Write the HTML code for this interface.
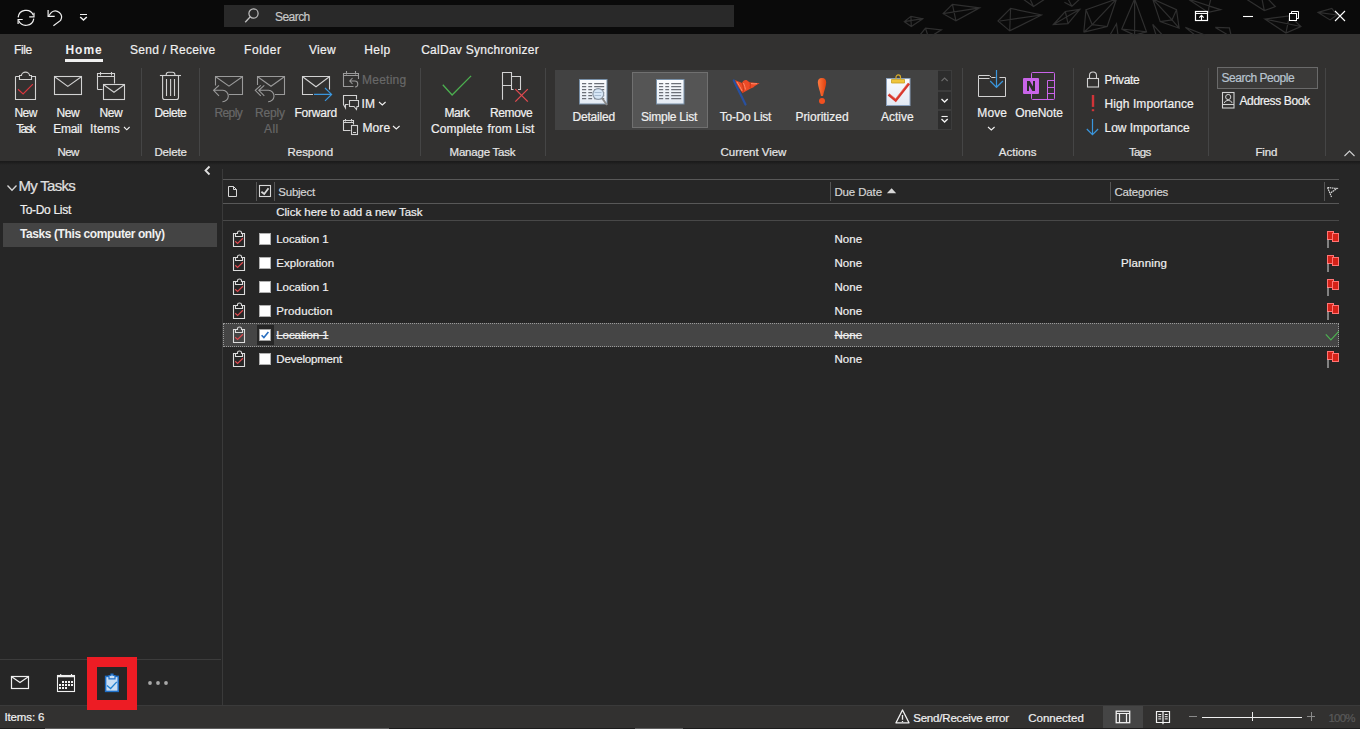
<!DOCTYPE html>
<html><head><meta charset="utf-8"><style>
html,body{margin:0;padding:0;width:1360px;height:729px;overflow:hidden;background:#262626}
body{position:relative;font-family:"Liberation Sans",sans-serif}
body>div,body>svg,body>span{position:absolute;display:block}
span{white-space:nowrap;-webkit-text-stroke:0.2px currentColor}
svg{overflow:visible}
</style></head><body>
<div style="left:0px;top:0px;width:1360px;height:34px;background:#0a0a0a;"></div>
<div style="left:224px;top:5px;width:510px;height:22px;background:#292929;"></div>
<div style="left:0px;top:34px;width:1360px;height:127px;background:#323130;"></div>
<div style="left:0px;top:161px;width:1360px;height:544px;background:#262626;"></div>
<div style="left:0px;top:161px;width:1360px;height:4px;background:linear-gradient(#1a1a1a,#1e1e1e 40%,#262626);"></div>
<div style="left:141px;top:68px;width:1px;height:88px;background:#454545;"></div>
<div style="left:199px;top:68px;width:1px;height:88px;background:#454545;"></div>
<div style="left:420px;top:68px;width:1px;height:88px;background:#454545;"></div>
<div style="left:545px;top:68px;width:1px;height:88px;background:#454545;"></div>
<div style="left:962px;top:68px;width:1px;height:88px;background:#454545;"></div>
<div style="left:1073px;top:68px;width:1px;height:88px;background:#454545;"></div>
<div style="left:1208px;top:68px;width:1px;height:88px;background:#454545;"></div>
<div style="left:1325px;top:68px;width:1px;height:88px;background:#454545;"></div>
<div style="left:65px;top:59px;width:38px;height:3px;background:#f0f0f0;"></div>
<div style="left:555px;top:70px;width:383px;height:60px;background:#424242;"></div>
<div style="left:632px;top:72px;width:76px;height:56px;background:#555555;box-sizing:border-box;border:1px solid #707070"></div>
<div style="left:938px;top:70px;width:14px;height:60px;background:#3c3c3c;"></div>
<div style="left:938px;top:71px;width:13px;height:19px;background:#2d2d2d;"></div>
<div style="left:938px;top:92px;width:13px;height:17px;background:#2d2d2d;"></div>
<div style="left:938px;top:111px;width:13px;height:18px;background:#2d2d2d;"></div>
<div style="left:1217px;top:67px;width:101px;height:22px;background:#3b3a39;box-sizing:border-box;border:1px solid #6a6a6a"></div>
<div style="left:3px;top:223px;width:214px;height:24px;background:#444444;"></div>
<div style="left:222px;top:169px;width:1px;height:536px;background:#3a3a3a;"></div>
<div style="left:0px;top:659px;width:221px;height:1px;background:#3c3c3c;"></div>
<div style="left:223px;top:179px;width:1116px;height:1px;background:#585858;"></div>
<div style="left:223px;top:203px;width:1116px;height:1px;background:#585858;"></div>
<div style="left:223px;top:220px;width:1116px;height:1px;background:#484848;"></div>
<div style="left:256px;top:182px;width:1px;height:19px;background:#555555;"></div>
<div style="left:274px;top:182px;width:1px;height:19px;background:#555555;"></div>
<div style="left:830px;top:182px;width:1px;height:19px;background:#555555;"></div>
<div style="left:1110px;top:182px;width:1px;height:19px;background:#555555;"></div>
<div style="left:1324px;top:182px;width:1px;height:19px;background:#555555;"></div>
<div style="left:223px;top:323px;width:1116px;height:24px;background:#454545;box-sizing:border-box;border:1px dotted #9a9a9a"></div>
<div style="left:257px;top:325px;width:17px;height:20px;background:#262626;"></div>
<div style="left:0px;top:705px;width:1360px;height:24px;background:#323130;"></div>
<div style="left:0px;top:705px;width:1360px;height:1px;background:#3a3a3a;"></div>
<div style="left:1103px;top:706px;width:40px;height:23px;background:#454545;"></div>
<div style="left:0px;top:728px;width:1360px;height:1px;background:#1c1c1c;"></div>
<div style="left:45px;top:728px;width:344px;height:1px;background:#5e5e5e;"></div>
<div style="left:635px;top:728px;width:48px;height:1px;background:#5e5e5e;"></div>
<div style="left:87px;top:657px;width:50px;height:53px;background:#ed1c24;"></div>
<div style="left:97px;top:667px;width:30px;height:33px;background:#262626;"></div>
<svg style="left:0;top:0" width="1360" height="34" viewBox="0 0 1360 34"><path d="M904.3,21.6 L910.9,16.3 L922.8,18.7 L911.3,26.5Z M910.9,16.3 L911.3,26.5 M904.3,21.6 L922.8,18.7 M943.1,13.7 L952.4,4.4 L979.7,7.8 L955.9,20.7Z M952.4,4.4 L955.9,20.7 M943.1,13.7 L979.7,7.8 M920,35 L925.5,28.2 L941.3,29.8 L930,37 M925.5,28.2 L928,36 M998,21 L1010.6,8.4 L1041.5,15 L1009.7,30.9Z M1010.6,8.4 L1009.7,30.9 M1000,21 L1041.5,15 M1023,-1 L1033.5,6.6 L1045,-1 M1030,-1 L1033.5,6.6 M1064.4,2.2 L1071.9,6.2 L1079.9,-1 M1068,-1 L1071.9,6.2 M1053.4,24.5 L1065.3,11.5 L1079.9,9.3 L1068,23.7Z M1065.3,11.5 L1068,23.7 M1053.4,24.5 L1079.9,9.3 M1086,9.7 L1116.5,-1 L1107.2,26.5 L1083.8,32.2 L1092.2,24.7 Z M1086,9.7 L1092.2,24.7 L1116.5,-1 M1092.2,24.7 L1107.2,26.5 M1086,9.7 L1083.8,32.2 M1110,35 L1116.5,23.8 L1118,35 M1134.6,-1 L1121.8,29.1 L1146.5,31.8 Z M1134.6,-1 L1134.6,35 M1121.8,29.1 L1134.6,35 L1146.5,31.8 M1152.7,-1 L1176.5,9.7 L1179.1,28.2 L1160.2,21.6 Z M1152.7,-1 L1172,19.9 L1176.5,9.7 M1160.2,21.6 L1172,19.9 L1179.1,28.2 M1188,-1 L1220.6,9.7 L1208.3,12.4 Z M1210.9,-1 L1209,6.2 L1220.6,9.7 M1209,6.2 L1208.3,12.4 M1152.7,24.3 L1162.4,35 M1152.7,24.3 L1156,35 M1185.3,27.4 L1205,35 M1185.3,27.4 L1195,35 M1215.3,27.4 L1229.4,27.8 L1231,35 M1215.3,27.4 L1228,35 M1246.2,-1 L1264.3,10.6 L1275.3,6.6 L1268,-1 M1264.3,10.6 L1262,-1 M1264.7,19 L1289.4,15.9 L1300.9,26.5 L1285.9,33.1 Z M1264.7,19 L1300.9,26.5 M1289.4,15.9 L1285.9,33.1 M1318.1,12.4 L1331.8,8.4 L1337,15 L1330,19.9 Z M1318.1,12.4 L1337,15" fill="none" stroke="#2f2f2f" stroke-width="1.2"/></svg>
<svg style="left:16px;top:8px;" width="20" height="20" viewBox="0 0 20 20"><path d="M2.1,9.4 A8,8 0 0 1 17.4,7.2 M17.8,10.6 A8,8 0 0 1 2.6,12.6" fill="none" stroke="#f0f0f0" stroke-width="1.2"/><path d="M18,4.8 V8.9 H13.2 M2.1,15.9 V11.5 H6.7" fill="none" stroke="#f0f0f0" stroke-width="1.2"/></svg>
<svg style="left:46px;top:8px;" width="20" height="20" viewBox="0 0 20 20"><path d="M2.1,2 V8.4 H8.7" fill="none" stroke="#f0f0f0" stroke-width="1.2"/><path d="M2.6,8 L5.4,4.4 A6.2,6.2 0 0 1 14.6,12.4 L7.4,17.8" fill="none" stroke="#f0f0f0" stroke-width="1.2"/></svg>
<svg style="left:78px;top:12px;" width="12" height="10" viewBox="0 0 12 10"><path d="M2,2.5 H9" stroke="#f0f0f0" stroke-width="1"/><path d="M2.2,5 L5.5,8 L8.8,5" fill="none" stroke="#f0f0f0" stroke-width="1.5"/></svg>
<svg style="left:243px;top:7px;" width="18" height="18" viewBox="0 0 18 18"><circle cx="10.5" cy="6.5" r="4.6" fill="none" stroke="#c0c0c0" stroke-width="1.2"/><path d="M7.3,9.8 L2.2,15.2" stroke="#c0c0c0" stroke-width="1.3"/></svg>
<svg style="left:1194px;top:10px;" width="16" height="12" viewBox="0 0 16 12"><rect x="1.5" y="1.5" width="12" height="9" fill="none" stroke="#fff" stroke-width="1.2"/><path d="M1.5,3.5 H13.5 M7.5,10.5 V5.5 M5.3,7.6 L7.5,5.4 L9.7,7.6" fill="none" stroke="#fff" stroke-width="1.1"/></svg>
<svg style="left:1242px;top:15px;" width="12" height="3" viewBox="0 0 12 3"><path d="M1,1.5 H11" stroke="#fff" stroke-width="1.1"/></svg>
<svg style="left:1288px;top:10px;" width="12" height="12" viewBox="0 0 12 12"><rect x="1.5" y="3.5" width="7" height="7" fill="#0a0a0a" stroke="#fff" stroke-width="1"/><path d="M3.5,3.5 V1.5 H10.5 V8.5 H8.5" fill="none" stroke="#fff" stroke-width="1"/></svg>
<svg style="left:1334px;top:10px;" width="12" height="12" viewBox="0 0 12 12"><path d="M1,1 L11,11 M11,1 L1,11" stroke="#fff" stroke-width="1.1"/></svg>
<svg style="left:14px;top:71px;" width="24" height="30" viewBox="0 0 24 30"><path d="M1.5,5.5 H5 M17.5,5.5 H21.5 V28.5 H1.5 V5.5" fill="none" stroke="#d2d2d2" stroke-width="1.1"/><path d="M5.5,4.5 H7.5 A4,3.4 0 0 1 15.5,4.5 H17.5 V8.5 H5.5 Z" fill="none" stroke="#d2d2d2" stroke-width="1.1"/><path d="M4,18.2 L9.1,23 L18.9,13.1" fill="none" stroke="#d9363e" stroke-width="1.2"/></svg>
<svg style="left:53px;top:75px;" width="30" height="21" viewBox="0 0 30 21"><rect x="1.5" y="1.5" width="27" height="18" fill="none" stroke="#d2d2d2" stroke-width="1.1"/><path d="M2,2 L14.8,11.4 L28,2" fill="none" stroke="#d2d2d2" stroke-width="1.1"/></svg>
<svg style="left:96px;top:71px;" width="31" height="30" viewBox="0 0 31 30"><path d="M1.5,18.5 V2.5 H18.5 V12.5 M1.5,5.5 H18.5 M4.5,1 V4.5 M15.5,1 V4.5 M1.5,18.5 H6.5" fill="none" stroke="#d2d2d2" stroke-width="1.1"/><rect x="7.5" y="13.5" width="21" height="15" fill="#323130" stroke="#d2d2d2" stroke-width="1.1"/><path d="M8,14 L18,21.3 L28,14" fill="none" stroke="#d2d2d2" stroke-width="1.1"/></svg>
<svg style="left:123px;top:126px;" width="8" height="5" viewBox="0 0 8 5"><path d="M1,1 L3.8,3.8 L6.6,1" fill="none" stroke="#f0f0f0" stroke-width="1.1"/></svg>
<svg style="left:158px;top:70px;" width="26" height="32" viewBox="0 0 26 32"><path d="M1.9,5.5 H23" fill="none" stroke="#d2d2d2" stroke-width="1.1"/><path d="M8.2,5.5 V4.5 A2.3,2.3 0 0 1 10.5,2.3 H14.6 A2.3,2.3 0 0 1 16.9,4.5 V5.5" fill="none" stroke="#d2d2d2" stroke-width="1.1"/><path d="M4.6,5.5 V27.5 A2,2 0 0 0 6.6,29.5 H18.5 A2,2 0 0 0 20.5,27.5 V5.5 M8.5,9 V26 M12.6,9 V26 M16.5,9 V26" fill="none" stroke="#d2d2d2" stroke-width="1.1"/></svg>
<svg style="left:212px;top:74px;" width="33" height="30" viewBox="0 0 33 30"><path d="M3.5,11.5 V2.5 H30.5 V20.5 H17" fill="none" stroke="#9a9a9a" stroke-width="1.1"/><path d="M4,3 L17,12.2 L30,3" fill="none" stroke="#9a9a9a" stroke-width="1.1"/><path d="M7,11.3 L1.6,16.3 L7,21.8 M1.6,16.3 H10.8 A5.7,5.7 0 0 1 10.4,27.7" fill="none" stroke="#9a9a9a" stroke-width="1.1"/></svg>
<svg style="left:253px;top:74px;" width="34" height="30" viewBox="0 0 34 30"><path d="M4.5,11 V2.5 H31.5 V20.5 H22" fill="none" stroke="#9a9a9a" stroke-width="1.1"/><path d="M5,3 L18,12.3 L31,3" fill="none" stroke="#9a9a9a" stroke-width="1.1"/><path d="M7.8,11.3 L2.3,16.3 L7.8,21.8 M11.3,11.3 L5.8,16.3 L11.3,21.8 M5.8,16.3 H15.5 A5.7,5.7 0 0 1 15.1,27.7" fill="none" stroke="#9a9a9a" stroke-width="1.1"/></svg>
<svg style="left:300px;top:74px;" width="36" height="30" viewBox="0 0 36 30"><path d="M29.5,15.5 V2.5 H2.5 V20.5 H13" fill="none" stroke="#d2d2d2" stroke-width="1.1"/><path d="M3,3 L16,12.7 L29,3" fill="none" stroke="#d2d2d2" stroke-width="1.1"/><path d="M14,20.4 H31.6 M25,14 L31.6,20.4 L25,26.9" fill="none" stroke="#3a96dd" stroke-width="1.2"/></svg>
<svg style="left:342px;top:70px;" width="19" height="19" viewBox="0 0 19 19"><path d="M11.5,16.5 H1.5 V3.5 H16.5 V9 M1.5,5.5 H16.5 M4.5,1 V4.5 M13.5,1 V4.5" fill="none" stroke="#9a9a9a" stroke-width="1.1"/><path d="M10.5,8 L7.8,11 L10.5,14 M7.8,11 H12.5 A3,3 0 0 1 13,17" fill="none" stroke="#9a9a9a" stroke-width="1.1"/></svg>
<svg style="left:342px;top:94px;" width="19" height="17" viewBox="0 0 19 17"><path d="M6.5,10.5 H3.5 L3.5,14 L1.5,10.5 V1.5 H14.5 V5.5" fill="none" stroke="#d2d2d2" stroke-width="1.1"/><path d="M7.5,6.5 H16.5 V12.5 H15 L14.5,15.5 L12,12.5 H7.5 Z" fill="none" stroke="#d2d2d2" stroke-width="1.1"/></svg>
<svg style="left:378px;top:101px;" width="9" height="6" viewBox="0 0 9 6"><path d="M1,1 L4.3,4 L7.6,1" fill="none" stroke="#f0f0f0" stroke-width="1.1"/></svg>
<svg style="left:342px;top:118px;" width="18" height="18" viewBox="0 0 18 18"><path d="M8.5,12.5 H1.5 V2.5 H11.5 V6.5 M1.5,4.5 H11.5 M3.5,1 V3.5 M9.5,1 V3.5" fill="none" stroke="#d2d2d2" stroke-width="1.1"/><rect x="9.5" y="7.5" width="6" height="9" fill="none" stroke="#d2d2d2" stroke-width="1.1"/><path d="M11,14.5 H14" stroke="#d2d2d2" stroke-width="1"/></svg>
<svg style="left:392px;top:125px;" width="9" height="6" viewBox="0 0 9 6"><path d="M1,1 L4.3,4 L7.6,1" fill="none" stroke="#f0f0f0" stroke-width="1.1"/></svg>
<svg style="left:441px;top:74px;" width="32" height="23" viewBox="0 0 32 23"><path d="M1.8,10.8 L11.1,21 L30.1,1.9" fill="none" stroke="#4cb050" stroke-width="1.3"/></svg>
<svg style="left:500px;top:70px;" width="30" height="33" viewBox="0 0 30 33"><path d="M2.5,29.8 V2.5 H11.5 V19.5 H13.5 M2.5,15.5 H11.5 M11.5,6.5 H20.5 V19.5 H18" fill="none" stroke="#d2d2d2" stroke-width="1.1"/><path d="M15.3,19.1 L27.8,31.6 M27.8,19.1 L15.3,31.6" stroke="#e04a50" stroke-width="1.3"/></svg>
<svg style="left:579px;top:79px;" width="30" height="28" viewBox="0 0 30 28"><defs><linearGradient id="lg579" x1="0" y1="0" x2="0" y2="1"><stop offset="0" stop-color="#fbfcfe"/><stop offset="1" stop-color="#e4ebf4"/></linearGradient></defs><rect x="0.5" y="0.5" width="27.5" height="24.5" fill="url(#lg579)" stroke="#7890a8" stroke-width="1"/><path d="M3,4.6 H7.2 M9.3,4.6 H13.1 M15.2,4.6 H25.2" stroke="#6c7078" stroke-width="1.3"/><path d="M3,7.6 H7.2 M9.3,7.6 H13.1 M15.2,7.6 H25.2" stroke="#6c7078" stroke-width="1.3"/><path d="M3,10.6 H7.2 M9.3,10.6 H13.1 M15.2,10.6 H25.2" stroke="#6c7078" stroke-width="1.3"/><path d="M3,13.6 H7.2 M9.3,13.6 H13.1 M15.2,13.6 H25.2" stroke="#6c7078" stroke-width="1.3"/><path d="M3,16.6 H7.2 M9.3,16.6 H13.1 M15.2,16.6 H25.2" stroke="#6c7078" stroke-width="1.3"/><path d="M3,19.6 H7.2 M9.3,19.6 H13.1 M15.2,19.6 H25.2" stroke="#6c7078" stroke-width="1.3"/><circle cx="19.3" cy="15" r="5.4" fill="#d6e6f6" stroke="#8a96a4" stroke-width="1.2"/><path d="M15.5,13.5 H22.5 M15.5,16.5 H22" stroke="#9ab0c8" stroke-width="0.8"/><path d="M23,19 L28,26" stroke="#8a8a8a" stroke-width="2"/></svg>
<svg style="left:656px;top:79px;" width="30" height="28" viewBox="0 0 30 28"><defs><linearGradient id="lg656" x1="0" y1="0" x2="0" y2="1"><stop offset="0" stop-color="#fbfcfe"/><stop offset="1" stop-color="#e4ebf4"/></linearGradient></defs><rect x="0.5" y="0.5" width="27.5" height="24.5" fill="url(#lg656)" stroke="#7890a8" stroke-width="1"/><path d="M3,4.6 H7.2 M9.3,4.6 H13.1 M15.2,4.6 H25.2" stroke="#6c7078" stroke-width="1.3"/><path d="M3,7.6 H7.2 M9.3,7.6 H13.1 M15.2,7.6 H25.2" stroke="#6c7078" stroke-width="1.3"/><path d="M3,10.6 H7.2 M9.3,10.6 H13.1 M15.2,10.6 H25.2" stroke="#6c7078" stroke-width="1.3"/><path d="M3,13.6 H7.2 M9.3,13.6 H13.1 M15.2,13.6 H25.2" stroke="#6c7078" stroke-width="1.3"/><path d="M3,16.6 H7.2 M9.3,16.6 H13.1 M15.2,16.6 H25.2" stroke="#6c7078" stroke-width="1.3"/><path d="M3,19.6 H7.2 M9.3,19.6 H13.1 M15.2,19.6 H25.2" stroke="#6c7078" stroke-width="1.3"/></svg>
<svg style="left:731px;top:78px;" width="30" height="29" viewBox="0 0 30 29"><path d="M2.8,2.5 L14.5,26.6" stroke="#2850a0" stroke-width="2.2" stroke-linecap="round"/><path d="M4,2.1 C6,3 9,4.5 11,5 C12,2.5 14,1.5 15.5,2 C17,3 18,4 19,4.5 C22,4.5 25,5 28.7,5.3 C26,6.5 24,8 22.2,9.5 C19,10.5 15,13 11.5,15.1 C9,12 6,7 4,2.1 Z" fill="#ec4a26"/><path d="M6,4 C8,7 9.5,10 11.2,13 M12.5,5 C13.5,7 14,9.5 14.5,11.5 M20,5.5 C22,6 24,6 26,5.6" stroke="#ff8a6a" stroke-width="1" fill="none"/><path d="M11,5 C12,8 13,11 12,14.5 M19,4.6 C19.5,6.5 19.5,8 19,10" stroke="#c03416" stroke-width="0.9" fill="none"/></svg>
<svg style="left:816px;top:77px;" width="12" height="28" viewBox="0 0 12 28"><defs><linearGradient id="exg" x1="0" y1="0" x2="1" y2="0"><stop offset="0" stop-color="#ff7a40"/><stop offset="1" stop-color="#e0400e"/></linearGradient></defs><path d="M6,1 C9,1 10.3,3 10.2,5.5 C10,9.5 8,14 7,19 H5 C4,14 2,9.5 1.8,5.5 C1.7,3 3,1 6,1 Z" fill="url(#exg)"/><circle cx="6" cy="24" r="3" fill="#f05020"/></svg>
<svg style="left:885px;top:75px;" width="27" height="32" viewBox="0 0 27 32"><defs><linearGradient id="acg" x1="0" y1="0" x2="0" y2="1"><stop offset="0" stop-color="#fafcff"/><stop offset="1" stop-color="#e2e8f2"/></linearGradient></defs><rect x="1.5" y="3.5" width="23.5" height="27" fill="url(#acg)" stroke="#8aa0bc" stroke-width="1"/><path d="M6.5,4.5 H19.5 V8 H6.5 Z" fill="#f0c53c" stroke="#c8a020" stroke-width="0.8"/><path d="M11,4 V2.2 A2,2 0 0 1 15.5,2.2 V4" fill="none" stroke="#d8ac28" stroke-width="1.2"/><path d="M3.5,19.5 L10.7,25.5 L24,8.5" fill="none" stroke="#d8382e" stroke-width="2.6"/><path d="M4.5,18.8 L10.6,23.8 L23,8" fill="none" stroke="#f08070" stroke-width="0.6"/></svg>
<svg style="left:940px;top:76px;" width="10" height="8" viewBox="0 0 10 8"><path d="M1.5,5 L4.6,2 L7.7,5" fill="none" stroke="#6a6a6a" stroke-width="1.1"/></svg>
<svg style="left:940px;top:97px;" width="10" height="8" viewBox="0 0 10 8"><path d="M1.5,2 L4.6,5 L7.7,2" fill="none" stroke="#f0f0f0" stroke-width="1.4"/></svg>
<svg style="left:940px;top:114px;" width="10" height="10" viewBox="0 0 10 10"><path d="M1.5,2.5 H7.7" stroke="#f0f0f0" stroke-width="1.1"/><path d="M1.5,5 L4.6,8 L7.7,5" fill="none" stroke="#f0f0f0" stroke-width="1.4"/></svg>
<svg style="left:976px;top:68px;" width="32" height="31" viewBox="0 0 32 31"><path d="M2.5,10.5 V7.5 H13.5 L15.5,9.5 H19.5 M23.5,9.5 H29.5 V28.5 H2.5 V10.5 H13.5" fill="none" stroke="#d2d2d2" stroke-width="1"/><path d="M20.5,2 V19.3 M14.2,13 L20.5,19.3 L26.9,13" fill="none" stroke="#3a96dd" stroke-width="1.2"/></svg>
<svg style="left:987px;top:126px;" width="9" height="6" viewBox="0 0 9 6"><path d="M1,1 L4.3,4 L7.6,1" fill="none" stroke="#f0f0f0" stroke-width="1.1"/></svg>
<svg style="left:1022px;top:71px;" width="35" height="30" viewBox="0 0 35 30"><rect x="9.5" y="1.5" width="23" height="27" rx="1" fill="none" stroke="#c964e9" stroke-width="1"/><path d="M25.5,9.5 V28.5 M25.5,9.5 H32.5 M25.5,16.5 H32.5 M25.5,22.5 H32.5" fill="none" stroke="#c964e9" stroke-width="1"/><rect x="1" y="7" width="16" height="16" rx="1" fill="#c964e9"/><path d="M5,20 V10 H7.8 L11,15.6 V10 H13 V20 H10.4 L7,14.2 V20 Z" fill="#2c2c2c"/></svg>
<svg style="left:1085px;top:70px;" width="16" height="19" viewBox="0 0 16 19"><rect x="2.5" y="8.5" width="11" height="8.5" fill="none" stroke="#d2d2d2" stroke-width="1.1"/><path d="M4.5,8.5 V5.5 A3.5,3.5 0 0 1 11.5,5.5 V8.5" fill="none" stroke="#d2d2d2" stroke-width="1.1"/></svg>
<svg style="left:1090px;top:94px;" width="6" height="18" viewBox="0 0 6 18"><rect x="1.8" y="1" width="2.4" height="11.9" fill="#d13438"/><rect x="1.8" y="15.2" width="2.4" height="2" fill="#d13438"/></svg>
<svg style="left:1085px;top:118px;" width="15" height="18" viewBox="0 0 15 18"><path d="M7.5,1 V16.6 M1.8,11 L7.5,16.6 L13.1,11" fill="none" stroke="#3a96dd" stroke-width="1.2"/></svg>
<svg style="left:1221px;top:91px;" width="15" height="18" viewBox="0 0 15 18"><rect x="1.5" y="1.5" width="11.5" height="15.5" fill="none" stroke="#d2d2d2" stroke-width="1.1"/><path d="M1.5,13.5 H13" stroke="#d2d2d2" stroke-width="1.1"/><circle cx="7.2" cy="6" r="2.6" fill="none" stroke="#d2d2d2" stroke-width="1"/><path d="M3.2,12 A4.2,3.8 0 0 1 11.2,12" fill="none" stroke="#d2d2d2" stroke-width="1"/></svg>
<svg style="left:1343px;top:149px;" width="13" height="9" viewBox="0 0 13 9"><path d="M1.5,7 L6.5,2 L11.5,7" fill="none" stroke="#d0d0d0" stroke-width="1.1"/></svg>
<svg style="left:202px;top:165px;" width="10" height="11" viewBox="0 0 10 11"><path d="M7.5,1.5 L3.5,5.5 L7.5,9.5" fill="none" stroke="#e0e0e0" stroke-width="1.8"/></svg>
<svg style="left:6px;top:184px;" width="12" height="9" viewBox="0 0 12 9"><path d="M1.5,1.5 L6,6.3 L10.5,1.5" fill="none" stroke="#d8d8d8" stroke-width="1.3"/></svg>
<svg style="left:226px;top:185px;" width="13" height="13" viewBox="0 0 13 13"><path d="M2.5,1.5 H7.5 L10.5,4.5 V11.5 H2.5 Z M7.5,1.5 V4.5 H10.5" fill="none" stroke="#d8d8d8" stroke-width="1"/></svg>
<svg style="left:258px;top:184px;" width="14" height="14" viewBox="0 0 14 14"><rect x="1.5" y="1.5" width="11" height="11" fill="none" stroke="#d8d8d8" stroke-width="1.1"/><path d="M3.4,7.7 L6.2,10 L10.5,4.2" fill="none" stroke="#d8d8d8" stroke-width="1.8"/></svg>
<svg style="left:885px;top:187px;" width="12" height="8" viewBox="0 0 12 8"><path d="M1.9,6.3 L6.6,1.2 L11.2,6.3 Z" fill="#d8d8d8"/></svg>
<svg style="left:1326px;top:185px;" width="13" height="13" viewBox="0 0 13 13"><path d="M1.5,2.5 L11,3.5 L4.7,7.8 M1.5,2.5 L5.5,12" fill="none" stroke="#e0e0e0" stroke-width="1.1" stroke-dasharray="1.6,0.6"/></svg>
<svg style="left:231px;top:228px;" width="16" height="20" viewBox="0 0 16 20"><path d="M4.5,5.5 H2.5 V18.5 H13.5 V5.5 H11.5" fill="none" stroke="#dcdcdc" stroke-width="1.1"/><path d="M4.5,5.5 H6.5 V4.6 A2,1.6 0 0 1 10.5,4.6 V5.5 H11.5 V8.5 H4.5 Z" fill="none" stroke="#dcdcdc" stroke-width="1.1"/><path d="M4.2,13.3 L6.6,15.5 L11.9,10.3" fill="none" stroke="#e04a50" stroke-width="1.2"/></svg>
<svg style="left:259px;top:233px;" width="13" height="13" viewBox="0 0 13 13"><rect x="0.5" y="0.5" width="11" height="11" fill="#ffffff" stroke="#b0b0b0" stroke-width="1"/></svg>
<svg style="left:1326px;top:227px;" width="16" height="18" viewBox="0 0 16 18"><rect x="1.5" y="4.5" width="6" height="8" fill="#d42218" stroke="#ff7474" stroke-width="1"/><rect x="6.5" y="6.5" width="6" height="8" fill="#d42218" stroke="#ff7474" stroke-width="1"/><path d="M2,12.5 V21" stroke="#dcdcdc" stroke-width="1"/></svg>
<svg style="left:231px;top:252px;" width="16" height="20" viewBox="0 0 16 20"><path d="M4.5,5.5 H2.5 V18.5 H13.5 V5.5 H11.5" fill="none" stroke="#dcdcdc" stroke-width="1.1"/><path d="M4.5,5.5 H6.5 V4.6 A2,1.6 0 0 1 10.5,4.6 V5.5 H11.5 V8.5 H4.5 Z" fill="none" stroke="#dcdcdc" stroke-width="1.1"/><path d="M4.2,13.3 L6.6,15.5 L11.9,10.3" fill="none" stroke="#e04a50" stroke-width="1.2"/></svg>
<svg style="left:259px;top:257px;" width="13" height="13" viewBox="0 0 13 13"><rect x="0.5" y="0.5" width="11" height="11" fill="#ffffff" stroke="#b0b0b0" stroke-width="1"/></svg>
<svg style="left:1326px;top:251px;" width="16" height="18" viewBox="0 0 16 18"><rect x="1.5" y="4.5" width="6" height="8" fill="#d42218" stroke="#ff7474" stroke-width="1"/><rect x="6.5" y="6.5" width="6" height="8" fill="#d42218" stroke="#ff7474" stroke-width="1"/><path d="M2,12.5 V21" stroke="#dcdcdc" stroke-width="1"/></svg>
<svg style="left:231px;top:276px;" width="16" height="20" viewBox="0 0 16 20"><path d="M4.5,5.5 H2.5 V18.5 H13.5 V5.5 H11.5" fill="none" stroke="#dcdcdc" stroke-width="1.1"/><path d="M4.5,5.5 H6.5 V4.6 A2,1.6 0 0 1 10.5,4.6 V5.5 H11.5 V8.5 H4.5 Z" fill="none" stroke="#dcdcdc" stroke-width="1.1"/><path d="M4.2,13.3 L6.6,15.5 L11.9,10.3" fill="none" stroke="#e04a50" stroke-width="1.2"/></svg>
<svg style="left:259px;top:281px;" width="13" height="13" viewBox="0 0 13 13"><rect x="0.5" y="0.5" width="11" height="11" fill="#ffffff" stroke="#b0b0b0" stroke-width="1"/></svg>
<svg style="left:1326px;top:275px;" width="16" height="18" viewBox="0 0 16 18"><rect x="1.5" y="4.5" width="6" height="8" fill="#d42218" stroke="#ff7474" stroke-width="1"/><rect x="6.5" y="6.5" width="6" height="8" fill="#d42218" stroke="#ff7474" stroke-width="1"/><path d="M2,12.5 V21" stroke="#dcdcdc" stroke-width="1"/></svg>
<svg style="left:231px;top:300px;" width="16" height="20" viewBox="0 0 16 20"><path d="M4.5,5.5 H2.5 V18.5 H13.5 V5.5 H11.5" fill="none" stroke="#dcdcdc" stroke-width="1.1"/><path d="M4.5,5.5 H6.5 V4.6 A2,1.6 0 0 1 10.5,4.6 V5.5 H11.5 V8.5 H4.5 Z" fill="none" stroke="#dcdcdc" stroke-width="1.1"/><path d="M4.2,13.3 L6.6,15.5 L11.9,10.3" fill="none" stroke="#e04a50" stroke-width="1.2"/></svg>
<svg style="left:259px;top:305px;" width="13" height="13" viewBox="0 0 13 13"><rect x="0.5" y="0.5" width="11" height="11" fill="#ffffff" stroke="#b0b0b0" stroke-width="1"/></svg>
<svg style="left:1326px;top:299px;" width="16" height="18" viewBox="0 0 16 18"><rect x="1.5" y="4.5" width="6" height="8" fill="#d42218" stroke="#ff7474" stroke-width="1"/><rect x="6.5" y="6.5" width="6" height="8" fill="#d42218" stroke="#ff7474" stroke-width="1"/><path d="M2,12.5 V21" stroke="#dcdcdc" stroke-width="1"/></svg>
<svg style="left:231px;top:324px;" width="16" height="20" viewBox="0 0 16 20"><path d="M4.5,5.5 H2.5 V18.5 H13.5 V5.5 H11.5" fill="none" stroke="#dcdcdc" stroke-width="1.1"/><path d="M4.5,5.5 H6.5 V4.6 A2,1.6 0 0 1 10.5,4.6 V5.5 H11.5 V8.5 H4.5 Z" fill="none" stroke="#dcdcdc" stroke-width="1.1"/><path d="M4.2,13.3 L6.6,15.5 L11.9,10.3" fill="none" stroke="#e04a50" stroke-width="1.2"/></svg>
<svg style="left:259px;top:329px;" width="13" height="13" viewBox="0 0 13 13"><rect x="0.5" y="0.5" width="11" height="11" fill="#ffffff" stroke="#a0a0a0" stroke-width="1"/><path d="M2.6,6.2 L4.9,8.6 L9.4,3" fill="none" stroke="#2a6fc0" stroke-width="1.6"/></svg>
<svg style="left:1324px;top:330px;" width="16" height="11" viewBox="0 0 16 11"><path d="M1.8,4.3 L6.9,9.9 L14.8,1.4" fill="none" stroke="#4cb050" stroke-width="1.2"/></svg>
<svg style="left:231px;top:348px;" width="16" height="20" viewBox="0 0 16 20"><path d="M4.5,5.5 H2.5 V18.5 H13.5 V5.5 H11.5" fill="none" stroke="#dcdcdc" stroke-width="1.1"/><path d="M4.5,5.5 H6.5 V4.6 A2,1.6 0 0 1 10.5,4.6 V5.5 H11.5 V8.5 H4.5 Z" fill="none" stroke="#dcdcdc" stroke-width="1.1"/><path d="M4.2,13.3 L6.6,15.5 L11.9,10.3" fill="none" stroke="#e04a50" stroke-width="1.2"/></svg>
<svg style="left:259px;top:353px;" width="13" height="13" viewBox="0 0 13 13"><rect x="0.5" y="0.5" width="11" height="11" fill="#ffffff" stroke="#b0b0b0" stroke-width="1"/></svg>
<svg style="left:1326px;top:347px;" width="16" height="18" viewBox="0 0 16 18"><rect x="1.5" y="4.5" width="6" height="8" fill="#d42218" stroke="#ff7474" stroke-width="1"/><rect x="6.5" y="6.5" width="6" height="8" fill="#d42218" stroke="#ff7474" stroke-width="1"/><path d="M2,12.5 V21" stroke="#dcdcdc" stroke-width="1"/></svg>
<svg style="left:10px;top:675px;" width="21" height="16" viewBox="0 0 21 16"><rect x="1.5" y="1.5" width="17" height="12" fill="none" stroke="#f0f0f0" stroke-width="1.2"/><path d="M2,2 L10,7.5 L18,2" fill="none" stroke="#f0f0f0" stroke-width="1.2"/></svg>
<svg style="left:56px;top:673px;" width="20" height="20" viewBox="0 0 20 20"><rect x="1.5" y="2.5" width="17" height="16" fill="none" stroke="#f0f0f0" stroke-width="1.1"/><path d="M1.5,3.6 H18.5 M4.7,1 V4 M15.5,1 V4" fill="none" stroke="#f0f0f0" stroke-width="1.1"/><rect x="6" y="8" width="2" height="2" fill="#f0f0f0"/><rect x="9" y="8" width="2" height="2" fill="#f0f0f0"/><rect x="12" y="8" width="2" height="2" fill="#f0f0f0"/><rect x="15" y="8" width="2" height="2" fill="#f0f0f0"/><rect x="3" y="11" width="2" height="2" fill="#f0f0f0"/><rect x="6" y="11" width="2" height="2" fill="#f0f0f0"/><rect x="9" y="11" width="2" height="2" fill="#f0f0f0"/><rect x="12" y="11" width="2" height="2" fill="#f0f0f0"/><rect x="15" y="11" width="2" height="2" fill="#f0f0f0"/><rect x="3" y="14" width="2" height="2" fill="#f0f0f0"/><rect x="6" y="14" width="2" height="2" fill="#f0f0f0"/><rect x="9" y="14" width="2" height="2" fill="#f0f0f0"/></svg>
<svg style="left:104px;top:673px;" width="16" height="20" viewBox="0 0 16 20"><rect x="1.6" y="3.4" width="12.6" height="15" fill="#c8def4" stroke="#1f70c8" stroke-width="1.5"/><path d="M5,2.5 H7 V1.2 H9 V2.5 H11 V5.8 H5 Z" fill="#c8def4" stroke="#1f70c8" stroke-width="1.2"/><path d="M3,12.5 L6.6,15.5 L12.8,8.9" fill="none" stroke="#2080d0" stroke-width="1.3"/></svg>
<svg style="left:148px;top:681px;" width="4" height="4" viewBox="0 0 4 4"><circle cx="2" cy="2" r="1.9" fill="#a8a8a8"/></svg>
<svg style="left:156px;top:681px;" width="4" height="4" viewBox="0 0 4 4"><circle cx="2" cy="2" r="1.9" fill="#a8a8a8"/></svg>
<svg style="left:164px;top:681px;" width="4" height="4" viewBox="0 0 4 4"><circle cx="2" cy="2" r="1.9" fill="#a8a8a8"/></svg>
<svg style="left:894px;top:708px;" width="17" height="17" viewBox="0 0 17 17"><path d="M8.5,2 L2,14.8 H15 Z" fill="none" stroke="#f0f0f0" stroke-width="1.3" stroke-linejoin="round"/><path d="M8.5,7 V11.8 M8.5,13 V14" stroke="#f0f0f0" stroke-width="1.3"/></svg>
<svg style="left:1114px;top:709px;" width="18" height="16" viewBox="0 0 18 16"><rect x="2.2" y="2.2" width="13.5" height="11.5" fill="none" stroke="#f0f0f0" stroke-width="1.3"/><path d="M2.2,4.5 H15.7 M5.5,4.5 V13.7 M12.5,4.5 V13.7" fill="none" stroke="#f0f0f0" stroke-width="1.2"/></svg>
<svg style="left:1154px;top:709px;" width="18" height="16" viewBox="0 0 18 16"><path d="M2.5,2.5 H8.5 L9,3.5 L9.5,2.5 H15.5 V13.5 H9.5 L9,14.5 L8.5,13.5 H2.5 Z M9,3.5 V13.5" fill="none" stroke="#f0f0f0" stroke-width="1.2"/><path d="M4.3,5.5 H7.2 M4.3,7.7 H7.2 M4.3,9.9 H7.2 M10.8,5.5 H13.7 M10.8,7.7 H13.7 M10.8,9.9 H13.7" stroke="#f0f0f0" stroke-width="1"/></svg>
<div style="left:1189px;top:716px;width:8px;height:1px;background:#8a8a8a;"></div>
<div style="left:1202px;top:717px;width:100px;height:1px;background:#f0f0f0;"></div>
<div style="left:1252px;top:712px;width:1px;height:9px;background:#e8e8e8;"></div>
<div style="left:1307px;top:716px;width:8px;height:1px;background:#8a8a8a;"></div>
<div style="left:1310.5px;top:712px;width:1px;height:9px;background:#8a8a8a;"></div>
<span style="left:275.00px;top:11.00px;font-size:12px;line-height:12px;font-weight:normal;color:#c8c8c8;letter-spacing:-0.550px;">Search</span>
<span style="left:14.00px;top:44.00px;font-size:12px;line-height:12px;font-weight:normal;color:#f0f0f0;letter-spacing:-0.387px;">File</span>
<span style="left:130.00px;top:44.00px;font-size:12px;line-height:12px;font-weight:normal;color:#f0f0f0;letter-spacing:0.299px;">Send / Receive</span>
<span style="left:244.10px;top:44.00px;font-size:12px;line-height:12px;font-weight:normal;color:#f0f0f0;letter-spacing:0.576px;">Folder</span>
<span style="left:308.90px;top:44.00px;font-size:12px;line-height:12px;font-weight:normal;color:#f0f0f0;letter-spacing:0.324px;">View</span>
<span style="left:364.20px;top:44.00px;font-size:12px;line-height:12px;font-weight:normal;color:#f0f0f0;letter-spacing:0.465px;">Help</span>
<span style="left:421.20px;top:44.00px;font-size:12px;line-height:12px;font-weight:normal;color:#f0f0f0;letter-spacing:0.266px;">CalDav Synchronizer</span>
<span style="left:65.50px;top:44.00px;font-size:12px;line-height:12px;font-weight:bold;color:#f0f0f0;letter-spacing:0.945px;-webkit-text-stroke:0;">Home</span>
<span style="left:14.40px;top:107.00px;font-size:12px;line-height:12px;font-weight:normal;color:#f0f0f0;letter-spacing:-0.470px;">New</span>
<span style="left:16.20px;top:123.00px;font-size:12px;line-height:12px;font-weight:normal;color:#f0f0f0;letter-spacing:-1.625px;">Task</span>
<span style="left:56.40px;top:107.00px;font-size:12px;line-height:12px;font-weight:normal;color:#f0f0f0;letter-spacing:-0.370px;">New</span>
<span style="left:53.30px;top:123.00px;font-size:12px;line-height:12px;font-weight:normal;color:#f0f0f0;letter-spacing:-0.285px;">Email</span>
<span style="left:99.60px;top:107.00px;font-size:12px;line-height:12px;font-weight:normal;color:#f0f0f0;letter-spacing:-0.470px;">New</span>
<span style="left:90.10px;top:123.00px;font-size:12px;line-height:12px;font-weight:normal;color:#f0f0f0;letter-spacing:0.066px;">Items</span>
<span style="left:154.40px;top:107.00px;font-size:12px;line-height:12px;font-weight:normal;color:#f0f0f0;letter-spacing:-0.483px;">Delete</span>
<span style="left:214.40px;top:107.00px;font-size:12px;line-height:12px;font-weight:normal;color:#686868;letter-spacing:-0.570px;">Reply</span>
<span style="left:255.00px;top:107.00px;font-size:12px;line-height:12px;font-weight:normal;color:#686868;letter-spacing:-0.170px;">Reply</span>
<span style="left:264.00px;top:123.00px;font-size:12px;line-height:12px;font-weight:normal;color:#686868;letter-spacing:0.415px;">All</span>
<span style="left:294.40px;top:107.00px;font-size:12px;line-height:12px;font-weight:normal;color:#f0f0f0;letter-spacing:-0.189px;">Forward</span>
<span style="left:362.00px;top:74.00px;font-size:12px;line-height:12px;font-weight:normal;color:#686868;letter-spacing:0.247px;">Meeting</span>
<span style="left:361.40px;top:98.00px;font-size:12px;line-height:12px;font-weight:normal;color:#f0f0f0;letter-spacing:0.166px;">IM</span>
<span style="left:362.40px;top:122.00px;font-size:12px;line-height:12px;font-weight:normal;color:#f0f0f0;letter-spacing:0.111px;">More</span>
<span style="left:444.50px;top:107.00px;font-size:12px;line-height:12px;font-weight:normal;color:#f0f0f0;letter-spacing:-0.489px;">Mark</span>
<span style="left:431.00px;top:123.00px;font-size:12px;line-height:12px;font-weight:normal;color:#f0f0f0;letter-spacing:0.045px;">Complete</span>
<span style="left:490.00px;top:107.00px;font-size:12px;line-height:12px;font-weight:normal;color:#f0f0f0;letter-spacing:-0.402px;">Remove</span>
<span style="left:487.60px;top:123.00px;font-size:12px;line-height:12px;font-weight:normal;color:#f0f0f0;letter-spacing:0.091px;">from List</span>
<span style="left:572.50px;top:111.00px;font-size:12px;line-height:12px;font-weight:normal;color:#f0f0f0;letter-spacing:-0.193px;">Detailed</span>
<span style="left:641.00px;top:111.00px;font-size:12px;line-height:12px;font-weight:normal;color:#f0f0f0;letter-spacing:-0.235px;">Simple List</span>
<span style="left:719.80px;top:111.00px;font-size:12px;line-height:12px;font-weight:normal;color:#f0f0f0;letter-spacing:-0.276px;">To-Do List</span>
<span style="left:795.40px;top:111.00px;font-size:12px;line-height:12px;font-weight:normal;color:#f0f0f0;letter-spacing:-0.018px;">Prioritized</span>
<span style="left:881.00px;top:111.00px;font-size:12px;line-height:12px;font-weight:normal;color:#f0f0f0;">Active</span>
<span style="left:977.30px;top:107.00px;font-size:12px;line-height:12px;font-weight:normal;color:#f0f0f0;letter-spacing:0.110px;">Move</span>
<span style="left:1015.20px;top:107.00px;font-size:12px;line-height:12px;font-weight:normal;color:#f0f0f0;letter-spacing:-0.059px;">OneNote</span>
<span style="left:1104.50px;top:74.00px;font-size:12px;line-height:12px;font-weight:normal;color:#f0f0f0;letter-spacing:-0.362px;">Private</span>
<span style="left:1104.50px;top:98.00px;font-size:12px;line-height:12px;font-weight:normal;color:#f0f0f0;letter-spacing:0.081px;">High Importance</span>
<span style="left:1104.50px;top:122.00px;font-size:12px;line-height:12px;font-weight:normal;color:#f0f0f0;letter-spacing:-0.016px;">Low Importance</span>
<span style="left:1221.40px;top:72.00px;font-size:12px;line-height:12px;font-weight:normal;color:#b8c4d0;letter-spacing:-0.454px;">Search People</span>
<span style="left:1239.50px;top:95.00px;font-size:12px;line-height:12px;font-weight:normal;color:#f0f0f0;letter-spacing:-0.382px;">Address Book</span>
<span style="left:57.40px;top:147.00px;font-size:11.5px;line-height:11.5px;font-weight:normal;color:#e6e6e6;letter-spacing:-0.550px;">New</span>
<span style="left:154.40px;top:147.00px;font-size:11.5px;line-height:11.5px;font-weight:normal;color:#e6e6e6;letter-spacing:-0.149px;">Delete</span>
<span style="left:287.60px;top:147.00px;font-size:11.5px;line-height:11.5px;font-weight:normal;color:#e6e6e6;letter-spacing:-0.073px;">Respond</span>
<span style="left:449.60px;top:147.00px;font-size:11.5px;line-height:11.5px;font-weight:normal;color:#e6e6e6;letter-spacing:-0.225px;">Manage Task</span>
<span style="left:720.60px;top:147.00px;font-size:11.5px;line-height:11.5px;font-weight:normal;color:#e6e6e6;letter-spacing:-0.050px;">Current View</span>
<span style="left:998.80px;top:147.00px;font-size:11.5px;line-height:11.5px;font-weight:normal;color:#e6e6e6;">Actions</span>
<span style="left:1129.00px;top:147.00px;font-size:11.5px;line-height:11.5px;font-weight:normal;color:#e6e6e6;letter-spacing:-0.714px;">Tags</span>
<span style="left:1255.50px;top:147.00px;font-size:11.5px;line-height:11.5px;font-weight:normal;color:#e6e6e6;letter-spacing:-0.158px;">Find</span>
<span style="left:18.40px;top:178.00px;font-size:15px;line-height:15px;font-weight:normal;color:#e0e0e0;letter-spacing:-0.686px;">My Tasks</span>
<span style="left:20.00px;top:204.00px;font-size:12px;line-height:12px;font-weight:normal;color:#f0f0f0;letter-spacing:-0.309px;">To-Do List</span>
<span style="left:20.00px;top:228.00px;font-size:12px;line-height:12px;font-weight:bold;color:#f0f0f0;letter-spacing:-0.406px;-webkit-text-stroke:0;">Tasks (This computer only)</span>
<span style="left:278.30px;top:187.00px;font-size:11.5px;line-height:11.5px;font-weight:normal;color:#d4d4d4;letter-spacing:-0.244px;">Subject</span>
<span style="left:834.40px;top:187.00px;font-size:11.5px;line-height:11.5px;font-weight:normal;color:#d4d4d4;letter-spacing:-0.127px;">Due Date</span>
<span style="left:1114.40px;top:187.00px;font-size:11.5px;line-height:11.5px;font-weight:normal;color:#d4d4d4;letter-spacing:-0.185px;">Categories</span>
<span style="left:276.30px;top:207.00px;font-size:11.5px;line-height:11.5px;font-weight:normal;color:#f0f0f0;letter-spacing:-0.021px;">Click here to add a new Task</span>
<span style="left:276.30px;top:234.00px;font-size:11.5px;line-height:11.5px;font-weight:normal;color:#f0f0f0;letter-spacing:-0.086px;">Location 1</span>
<span style="left:834.40px;top:234.00px;font-size:11.5px;line-height:11.5px;font-weight:normal;color:#f0f0f0;letter-spacing:0.068px;">None</span>
<span style="left:276.30px;top:258.00px;font-size:11.5px;line-height:11.5px;font-weight:normal;color:#f0f0f0;letter-spacing:0.036px;">Exploration</span>
<span style="left:834.40px;top:258.00px;font-size:11.5px;line-height:11.5px;font-weight:normal;color:#f0f0f0;letter-spacing:0.068px;">None</span>
<span style="left:276.30px;top:282.00px;font-size:11.5px;line-height:11.5px;font-weight:normal;color:#f0f0f0;letter-spacing:-0.086px;">Location 1</span>
<span style="left:834.40px;top:282.00px;font-size:11.5px;line-height:11.5px;font-weight:normal;color:#f0f0f0;letter-spacing:0.068px;">None</span>
<span style="left:276.30px;top:306.00px;font-size:11.5px;line-height:11.5px;font-weight:normal;color:#f0f0f0;letter-spacing:0.135px;">Production</span>
<span style="left:834.40px;top:306.00px;font-size:11.5px;line-height:11.5px;font-weight:normal;color:#f0f0f0;letter-spacing:0.068px;">None</span>
<span style="left:276.30px;top:330.00px;font-size:11.5px;line-height:11.5px;font-weight:normal;color:#f0f0f0;letter-spacing:-0.086px;text-decoration:line-through;">Location 1</span>
<span style="left:834.40px;top:330.00px;font-size:11.5px;line-height:11.5px;font-weight:normal;color:#f0f0f0;letter-spacing:0.068px;text-decoration:line-through;">None</span>
<span style="left:276.30px;top:354.00px;font-size:11.5px;line-height:11.5px;font-weight:normal;color:#f0f0f0;letter-spacing:-0.186px;">Development</span>
<span style="left:834.40px;top:354.00px;font-size:11.5px;line-height:11.5px;font-weight:normal;color:#f0f0f0;letter-spacing:0.068px;">None</span>
<span style="left:1121.00px;top:258.00px;font-size:11.5px;line-height:11.5px;font-weight:normal;color:#f0f0f0;letter-spacing:0.162px;">Planning</span>
<span style="left:4.50px;top:712.00px;font-size:11.5px;line-height:11.5px;font-weight:normal;color:#f0f0f0;letter-spacing:-0.144px;">Items: 6</span>
<span style="left:913.20px;top:713.00px;font-size:11.5px;line-height:11.5px;font-weight:normal;color:#f0f0f0;letter-spacing:-0.191px;">Send/Receive error</span>
<span style="left:1028.20px;top:713.00px;font-size:11.5px;line-height:11.5px;font-weight:normal;color:#f0f0f0;">Connected</span>
<span style="left:1328.50px;top:713.00px;font-size:11.5px;line-height:11.5px;font-weight:normal;color:#5a5a5a;letter-spacing:-0.796px;">100%</span>
</body></html>
